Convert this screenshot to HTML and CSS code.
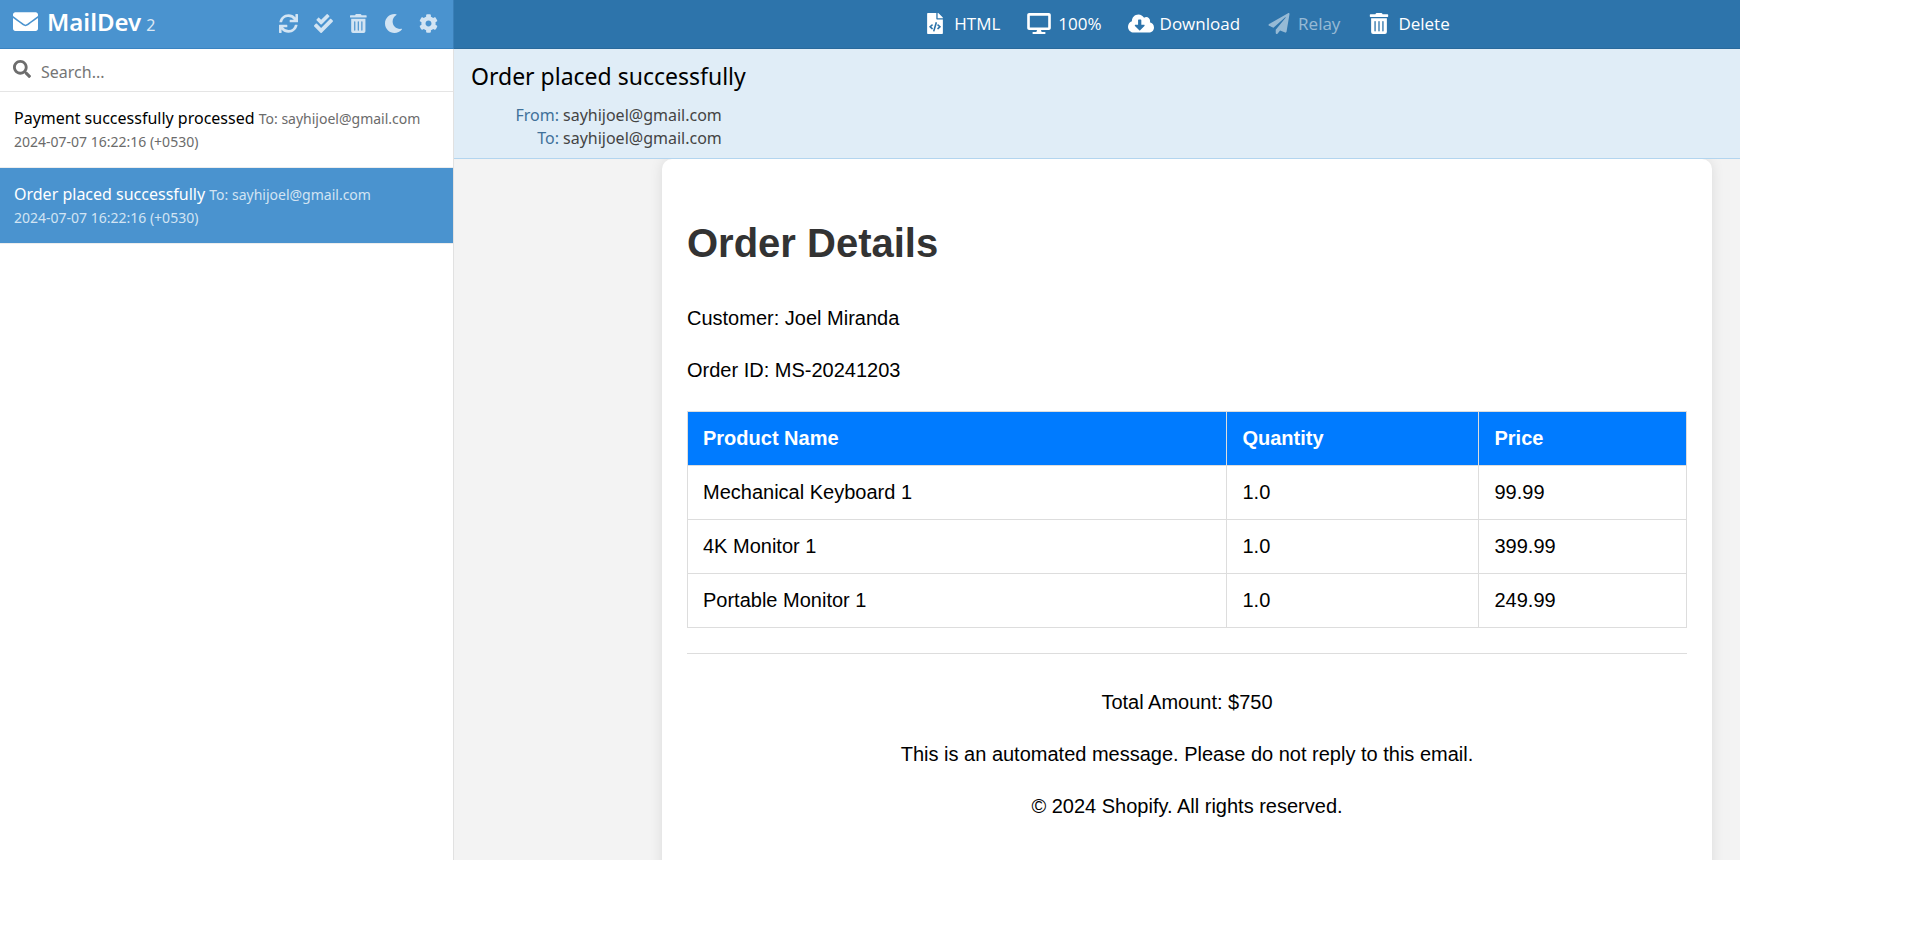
FILE: index.html
```html
<!DOCTYPE html>
<html lang="en">
<head>
<meta charset="utf-8">
<title>MailDev</title>
<link rel="stylesheet" href="styles.css">
</head>
<body>
<div class="app">
  <aside class="sidebar">
    <header class="sidebar-header">
      <h1 class="brand">
        <svg class="brand-icon" viewBox="0 64 512 384" aria-hidden="true"><path d="M502.3 190.8c3.900-3.100 9.700-.2 9.700 4.700V400c0 26.500-21.500 48-48 48H48c-26.500 0-48-21.500-48-48V195.600c0-5 5.700-7.800 9.700-4.700 22.400 17.400 52.100 39.500 154.100 113.600 21.100 15.400 56.700 47.800 92.200 47.600 35.700.3 72-32.800 92.300-47.600 102-74.100 131.600-96.300 154-113.700zM256 320c23.200.4 56.600-29.200 73.400-41.400 132.700-96.300 142.800-104.700 173.400-128.700 5.800-4.500 9.200-11.500 9.200-18.900v-19c0-26.500-21.500-48-48-48H48c-26.500 0-48 21.500-48 48v19c0 7.400 3.400 14.300 9.200 18.900 30.600 23.900 40.700 32.400 173.400 128.700 16.800 12.200 50.200 41.800 73.400 41.400z"/></svg>
        <span class="brand-name">MailDev</span>
        <small class="brand-version">2</small>
      </h1>
      <nav class="sidebar-actions">
        <button class="icon-button" type="button" aria-label="Refresh"><svg viewBox="0 0 512 512"><path d="M440.65 12.57l4 82.77A247.16 247.16 0 0 0 255.83 8C134.73 8 33.91 94.92 12.29 209.82A12 12 0 0 0 24.09 224h49.05a12 12 0 0 0 11.67-9.26 175.91 175.91 0 0 1 317-56.94l-101.46-4.86a12 12 0 0 0-12.57 12v47.41a12 12 0 0 0 12 12H500a12 12 0 0 0 12-12V12a12 12 0 0 0-12-12h-47.37a12 12 0 0 0-11.98 12.57zM255.83 432a175.61 175.61 0 0 1-146-77.8l101.8 4.87a12 12 0 0 0 12.57-12v-47.4a12 12 0 0 0-12-12H12a12 12 0 0 0-12 12V500a12 12 0 0 0 12 12h47.35a12 12 0 0 0 12-12.6l-4.15-82.57A247.17 247.17 0 0 0 255.83 504c121.11 0 221.93-86.92 243.55-201.82a12 12 0 0 0-11.8-14.18h-49.05a12 12 0 0 0-11.67 9.26A175.86 175.86 0 0 1 255.83 432z"/></svg></button>
        <button class="icon-button" type="button" aria-label="Mark all as read"><svg viewBox="0 0 512 512"><path d="M505 174.8l-39.6-39.6c-9.4-9.4-24.6-9.4-33.9 0L192 374.7 80.6 263.2c-9.4-9.4-24.6-9.4-33.9 0L7 302.9c-9.4 9.4-9.4 24.6 0 34L175 505c9.4 9.4 24.6 9.4 33.9 0l296-296.2c9.4-9.5 9.4-24.7.1-34zm-324.3 106c6.2 6.3 16.4 6.3 22.6 0l208-208.2c6.2-6.3 6.2-16.4 0-22.6L366.1 4.7c-6.2-6.3-16.4-6.3-22.6 0L192 156.2l-55.4-55.5c-6.2-6.3-16.4-6.3-22.6 0L68.7 146c-6.2 6.3-6.2 16.4 0 22.6l112 112.2z"/></svg></button>
        <button class="icon-button" type="button" aria-label="Delete all"><svg viewBox="0 0 448 512"><path d="M32 464a48 48 0 0 0 48 48h288a48 48 0 0 0 48-48V128H32zm272-256a16 16 0 0 1 32 0v224a16 16 0 0 1-32 0zm-96 0a16 16 0 0 1 32 0v224a16 16 0 0 1-32 0zm-96 0a16 16 0 0 1 32 0v224a16 16 0 0 1-32 0zM432 32H312l-9.4-18.7A24 24 0 0 0 281.1 0H166.8a23.72 23.72 0 0 0-21.4 13.3L136 32H16A16 16 0 0 0 0 48v32a16 16 0 0 0 16 16h416a16 16 0 0 0 16-16V48a16 16 0 0 0-16-16z"/></svg></button>
        <button class="icon-button" type="button" aria-label="Dark mode"><svg viewBox="0 0 512 512"><path d="M283.211 512c78.962 0 151.079-35.925 198.857-94.792 7.068-8.708-.639-21.43-11.562-19.35-124.203 23.654-238.262-71.576-238.262-196.954 0-72.222 38.662-138.635 101.498-174.394 9.686-5.512 7.25-20.197-3.756-22.23A258.156 258.156 0 0 0 283.211 0c-141.309 0-256 114.511-256 256 0 141.309 114.511 256 256 256z"/></svg></button>
        <button class="icon-button" type="button" aria-label="Settings"><svg viewBox="0 0 512 512"><path d="M487.4 315.7l-42.6-24.6c4.3-23.2 4.3-47 0-70.2l42.6-24.6c4.9-2.8 7.1-8.6 5.5-14-11.1-35.6-30-67.8-54.7-94.6-3.8-4.1-10-5.1-14.8-2.3L380.8 110c-17.9-15.4-38.5-27.3-60.8-35.1V25.8c0-5.6-3.9-10.5-9.4-11.7-36.7-8.2-74.3-7.8-109.2 0-5.5 1.2-9.4 6.1-9.4 11.7V75c-22.2 7.9-42.8 19.8-60.8 35.1L88.7 85.5c-4.9-2.8-11-1.9-14.8 2.3-24.7 26.7-43.6 58.9-54.7 94.6-1.7 5.4.6 11.2 5.5 14L67.3 221c-4.3 23.2-4.3 47 0 70.2l-42.6 24.6c-4.9 2.8-7.1 8.6-5.5 14 11.1 35.6 30 67.8 54.7 94.6 3.8 4.1 10 5.1 14.8 2.3l42.6-24.6c17.9 15.4 38.5 27.3 60.8 35.1v49.2c0 5.6 3.9 10.5 9.4 11.7 36.7 8.2 74.3 7.8 109.2 0 5.5-1.2 9.4-6.1 9.4-11.7v-49.2c22.2-7.900 42.800-19.800 60.800-35.100l42.600 24.600c4.900 2.800 11 1.900 14.800-2.300 24.700-26.700 43.600-58.900 54.700-94.600 1.500-5.500-.7-11.300-5.600-14.100zM256 336c-44.100 0-80-35.900-80-80s35.900-80 80-80 80 35.900 80 80-35.900 80-80 80z"/></svg></button>
      </nav>
    </header>
    <label class="search">
      <svg class="search-icon" viewBox="0 0 512 512" aria-hidden="true"><path d="M505 442.7L405.3 343c-4.5-4.5-10.6-7-17-7H372c27.6-35.3 44-79.7 44-128C416 93.1 322.9 0 208 0S0 93.1 0 208s93.1 208 208 208c48.3 0 92.7-16.4 128-44v16.3c0 6.4 2.5 12.5 7 17l99.7 99.7c9.4 9.4 24.6 9.4 33.9 0l28.3-28.3c9.4-9.4 9.4-24.6.1-34zM208 336c-70.7 0-128-57.2-128-128 0-70.700 57.200-128 128-128 70.700 0 128 57.200 128 128 0 70.700-57.200 128-128 128z"/></svg>
      <input class="search-input" type="text" placeholder="Search..." aria-label="Search">
    </label>
    <ul class="mail-list">
      <li><a class="mail" href="#payment"><span class="mail-subject">Payment successfully processed</span> <span class="mail-meta">To: sayhijoel@gmail.com</span><br><span class="mail-meta">2024-07-07 16:22:16 (+0530)</span></a></li>
      <li><a class="mail mail-current" href="#order"><span class="mail-subject">Order placed successfully</span> <span class="mail-meta">To: sayhijoel@gmail.com</span><br><span class="mail-meta">2024-07-07 16:22:16 (+0530)</span></a></li>
    </ul>
  </aside>
  <main class="main">
    <div class="toolbar">
      <button class="tool" type="button"><svg class="tool-icon" viewBox="0 0 384 512"><path d="M384 121.941V128H256V0h6.059c6.365 0 12.470 2.529 16.971 7.029l97.941 97.941A24.005 24.005 0 0 1 384 121.941zM248 160c-13.200 0-24-10.800-24-24V0H24C10.745 0 0 10.745 0 24v464c0 13.255 10.745 24 24 24h336c13.255 0 24-10.745 24-24V160H248zM123.206 400.505a5.400 5.400 0 0 1-7.633.246l-64.866-60.812a5.400 5.400 0 0 1 0-7.879l64.866-60.812a5.400 5.400 0 0 1 7.633.246l19.579 20.885a5.400 5.400 0 0 1-.372 7.747L101.650 336l40.763 35.874a5.400 5.400 0 0 1 .372 7.747l-19.579 20.884zm51.295 50.479l-27.453-7.970a5.402 5.402 0 0 1-3.681-6.692l61.440-211.626a5.402 5.402 0 0 1 6.692-3.681l27.452 7.970a5.400 5.400 0 0 1 3.680 6.692l-61.440 211.626a5.397 5.397 0 0 1-6.690 3.681zm160.792-111.045l-64.866 60.812a5.400 5.400 0 0 1-7.633-.246l-19.580-20.885a5.400 5.400 0 0 1 .372-7.747L284.350 336l-40.763-35.874a5.400 5.400 0 0 1-.372-7.747l19.580-20.885a5.400 5.400 0 0 1 7.633-.246l64.866 60.812a5.400 5.400 0 0 1-.001 7.879z"/></svg>HTML</button>
      <button class="tool" type="button"><svg class="tool-icon" viewBox="0 0 576 512"><path d="M528 0H48C21.500 0 0 21.500 0 48v320c0 26.500 21.500 48 48 48h192l-16 48h-72c-13.300 0-24 10.700-24 24s10.700 24 24 24h272c13.300 0 24-10.700 24-24s-10.700-24-24-24h-72l-16-48h192c26.500 0 48-21.500 48-48V48c0-26.500-21.500-48-48-48zm-16 352H64V64h448v288z"/></svg>100%</button>
      <button class="tool" type="button"><svg class="tool-icon" viewBox="0 0 640 512"><path d="M537.600 226.600c4.100-10.700 6.400-22.400 6.400-34.600 0-53-43-96-96-96-19.700 0-38.100 6-53.300 16.200C367 64.200 315.300 32 256 32c-88.400 0-160 71.600-160 160 0 2.700.1 5.400.2 8.100C40.200 219.800 0 273.200 0 336c0 79.500 64.500 144 144 144h368c70.700 0 128-57.300 128-128 0-61.900-44-113.600-102.400-125.400zm-132.900 88.700L299.300 420.700c-6.200 6.200-16.400 6.200-22.600 0L171.300 315.300c-10.100-10.100-2.900-27.300 11.300-27.300H248V176c0-8.800 7.200-16 16-16h48c8.800 0 16 7.200 16 16v112h65.400c14.200 0 21.400 17.200 11.300 27.300z"/></svg>Download</button>
      <button class="tool" type="button" disabled><svg class="tool-icon" viewBox="0 0 512 512"><path d="M476 3.200L12.500 270.600c-18.100 10.400-15.800 35.600 2.200 43.200L121 358.400l287.300-253.200c5.500-4.900 13.300 2.600 8.600 8.300L176 407v80.500c0 23.600 28.500 32.900 42.500 15.800L282 426l124.600 52.200c14.200 6 30.400-2.900 33-18.200l72-432C515 7.800 493.300-6.800 476 3.200z"/></svg>Relay</button>
      <button class="tool" type="button"><svg class="tool-icon" viewBox="0 0 448 512"><path d="M32 464a48 48 0 0 0 48 48h288a48 48 0 0 0 48-48V128H32zm272-256a16 16 0 0 1 32 0v224a16 16 0 0 1-32 0zm-96 0a16 16 0 0 1 32 0v224a16 16 0 0 1-32 0zm-96 0a16 16 0 0 1 32 0v224a16 16 0 0 1-32 0zM432 32H312l-9.400-18.700A24 24 0 0 0 281.100 0H166.800a23.720 23.720 0 0 0-21.400 13.300L136 32H16A16 16 0 0 0 0 48v32a16 16 0 0 0 16 16h416a16 16 0 0 0 16-16V48a16 16 0 0 0-16-16z"/></svg>Delete</button>
    </div>
    <header class="message-header">
      <h2 class="message-title">Order placed successfully</h2>
      <dl class="message-meta">
        <dt>From:</dt><dd>sayhijoel@gmail.com</dd>
        <dt>To:</dt><dd>sayhijoel@gmail.com</dd>
      </dl>
    </header>
    <div class="preview">
      <article class="email">
        <h1 class="email-title">Order Details</h1>
        <p>Customer: Joel Miranda</p>
        <p>Order ID: MS-20241203</p>
        <table class="order">
          <colgroup><col class="col-name"><col class="col-quantity"><col></colgroup>
          <thead><tr><th>Product Name</th><th>Quantity</th><th>Price</th></tr></thead>
          <tbody>
            <tr><td>Mechanical Keyboard 1</td><td>1.0</td><td>99.99</td></tr>
            <tr><td>4K Monitor 1</td><td>1.0</td><td>399.99</td></tr>
            <tr><td>Portable Monitor 1</td><td>1.0</td><td>249.99</td></tr>
          </tbody>
        </table>
        <footer class="email-footer">
          <p>Total Amount: $750</p>
          <p>This is an automated message. Please do not reply to this email.</p>
          <p>© 2024 Shopify. All rights reserved.</p>
        </footer>
      </article>
    </div>
  </main>
</div>
</body>
</html>
```
FILE: styles.css
```css
* { box-sizing: border-box; }

body {
  margin: 0;
  height: 100vh;
  padding: 0 180px 89px 0;
  background: #fff;
  color: #000;
  font: 16px/23px "Noto Sans", "Open Sans", sans-serif;
}

button, input { font: inherit; }

.app { display: flex; height: 100%; overflow: hidden; }

/* Sidebar */
.sidebar {
  flex: 0 0 454px;
  border-right: 1px solid #e1e1e1;
}
.sidebar-header {
  display: flex;
  align-items: center;
  justify-content: space-between;
  height: 49px;
  margin-right: -1px;
  padding: 0 7px 2px 13px;
  background: #4a93cf;
  border-bottom: 1px solid #3a83c1;
  border-right: 1px solid #3a7fb8;
  color: #fff;
}
.brand { display: flex; align-items: baseline; margin: 0; padding-top: 1px; line-height: 32px; }
.brand-icon { width: 25px; height: 19px; margin-right: 9px; fill: #fff; }
.brand-name { font-size: 24px; font-weight: 600; }
.brand-version { margin-left: 5px; font-size: 16px; font-weight: 400; opacity: .8; }
.sidebar-actions { display: flex; }
.icon-button {
  display: flex;
  justify-content: center;
  width: 35px;
  padding: 0;
  border: 0;
  background: none;
}
.icon-button svg { height: 19px; fill: #d2e4f3; }

.search {
  display: flex;
  align-items: center;
  height: 43px;
  padding: 0 13px;
  border-bottom: 1px solid #e5e5e5;
}
.search-icon { width: 18px; height: 18px; margin: 0 10px 2px 0; fill: #6d6d6d; }
.search-input { flex: 1; min-width: 0; padding: 4px 0 0; border: 0; outline: 0; background: none; }
.search-input::placeholder { color: #757575; opacity: 1; }

.mail-list { margin: 0; padding: 0; list-style: none; }
.mail {
  display: block;
  height: 76px;
  padding: 15px 14px 14px;
  border-bottom: 1px solid #ededed;
  color: #000;
  text-decoration: none;
  white-space: nowrap;
}
.mail-meta { color: #6b6b6b; font-size: 14px; }
.mail-current { background: #4a93cf; color: #fff; }
.mail-current .mail-meta { color: #d2e4f3; }

/* Message */
.main { display: flex; flex: 1; flex-direction: column; min-width: 0; }
.toolbar {
  display: flex;
  flex: none;
  justify-content: center;
  height: 49px;
  padding: 0 0 2px 178px;
  background: #2d74ab;
  border-bottom: 1px solid #29699b;
}
.tool {
  display: flex;
  align-items: center;
  gap: 6px;
  padding: 0 13px;
  border: 0;
  background: none;
  color: #fff;
  font-family: "Open Sans", "Noto Sans", sans-serif;
  font-size: 17px;
}
.tool-icon { width: 26px; height: 21px; fill: currentColor; }
.tool:disabled { opacity: .5; }

.message-header {
  flex: none;
  padding: 11px 17px 8px;
  background: #e0edf7;
  border-bottom: 1px solid #b3d5ef;
}
.message-title { margin: 0; font-size: 23px; font-weight: 400; line-height: 32px; }
.message-meta {
  display: grid;
  grid-template-columns: 88px 1fr;
  column-gap: 4px;
  margin: 12px 0 0;
}
.message-meta dt { color: #40719a; text-align: right; }
.message-meta dd { margin: 0; color: #444; }

.preview { flex: 1; min-height: 0; overflow: hidden; background: #f3f3f3; }
.email {
  max-width: 1050px;
  min-height: 100%;
  margin: 0 28px 0 auto;
  padding: 25px 25px 55px;
  border-radius: 10px;
  background: #fff;
  box-shadow: 0 0 13px rgba(0, 0, 0, .1);
  font: 20px/32px "Liberation Sans", Arial, sans-serif;
}
.email-title { margin: 27px 0; color: #333; font-size: 40px; line-height: 64px; }
.email p { margin: 20px 0; }
.order { width: 100%; margin: 25px 0; border-collapse: collapse; line-height: 23px; }
.col-name { width: 54%; }
.col-quantity { width: 252px; }
.order th, .order td { padding: 15px; border: 1px solid #ddd; text-align: left; }
.order th { background: #007bff; color: #fff; }
.email-footer { padding-top: 12px; border-top: 1px solid #ddd; text-align: center; }
```
